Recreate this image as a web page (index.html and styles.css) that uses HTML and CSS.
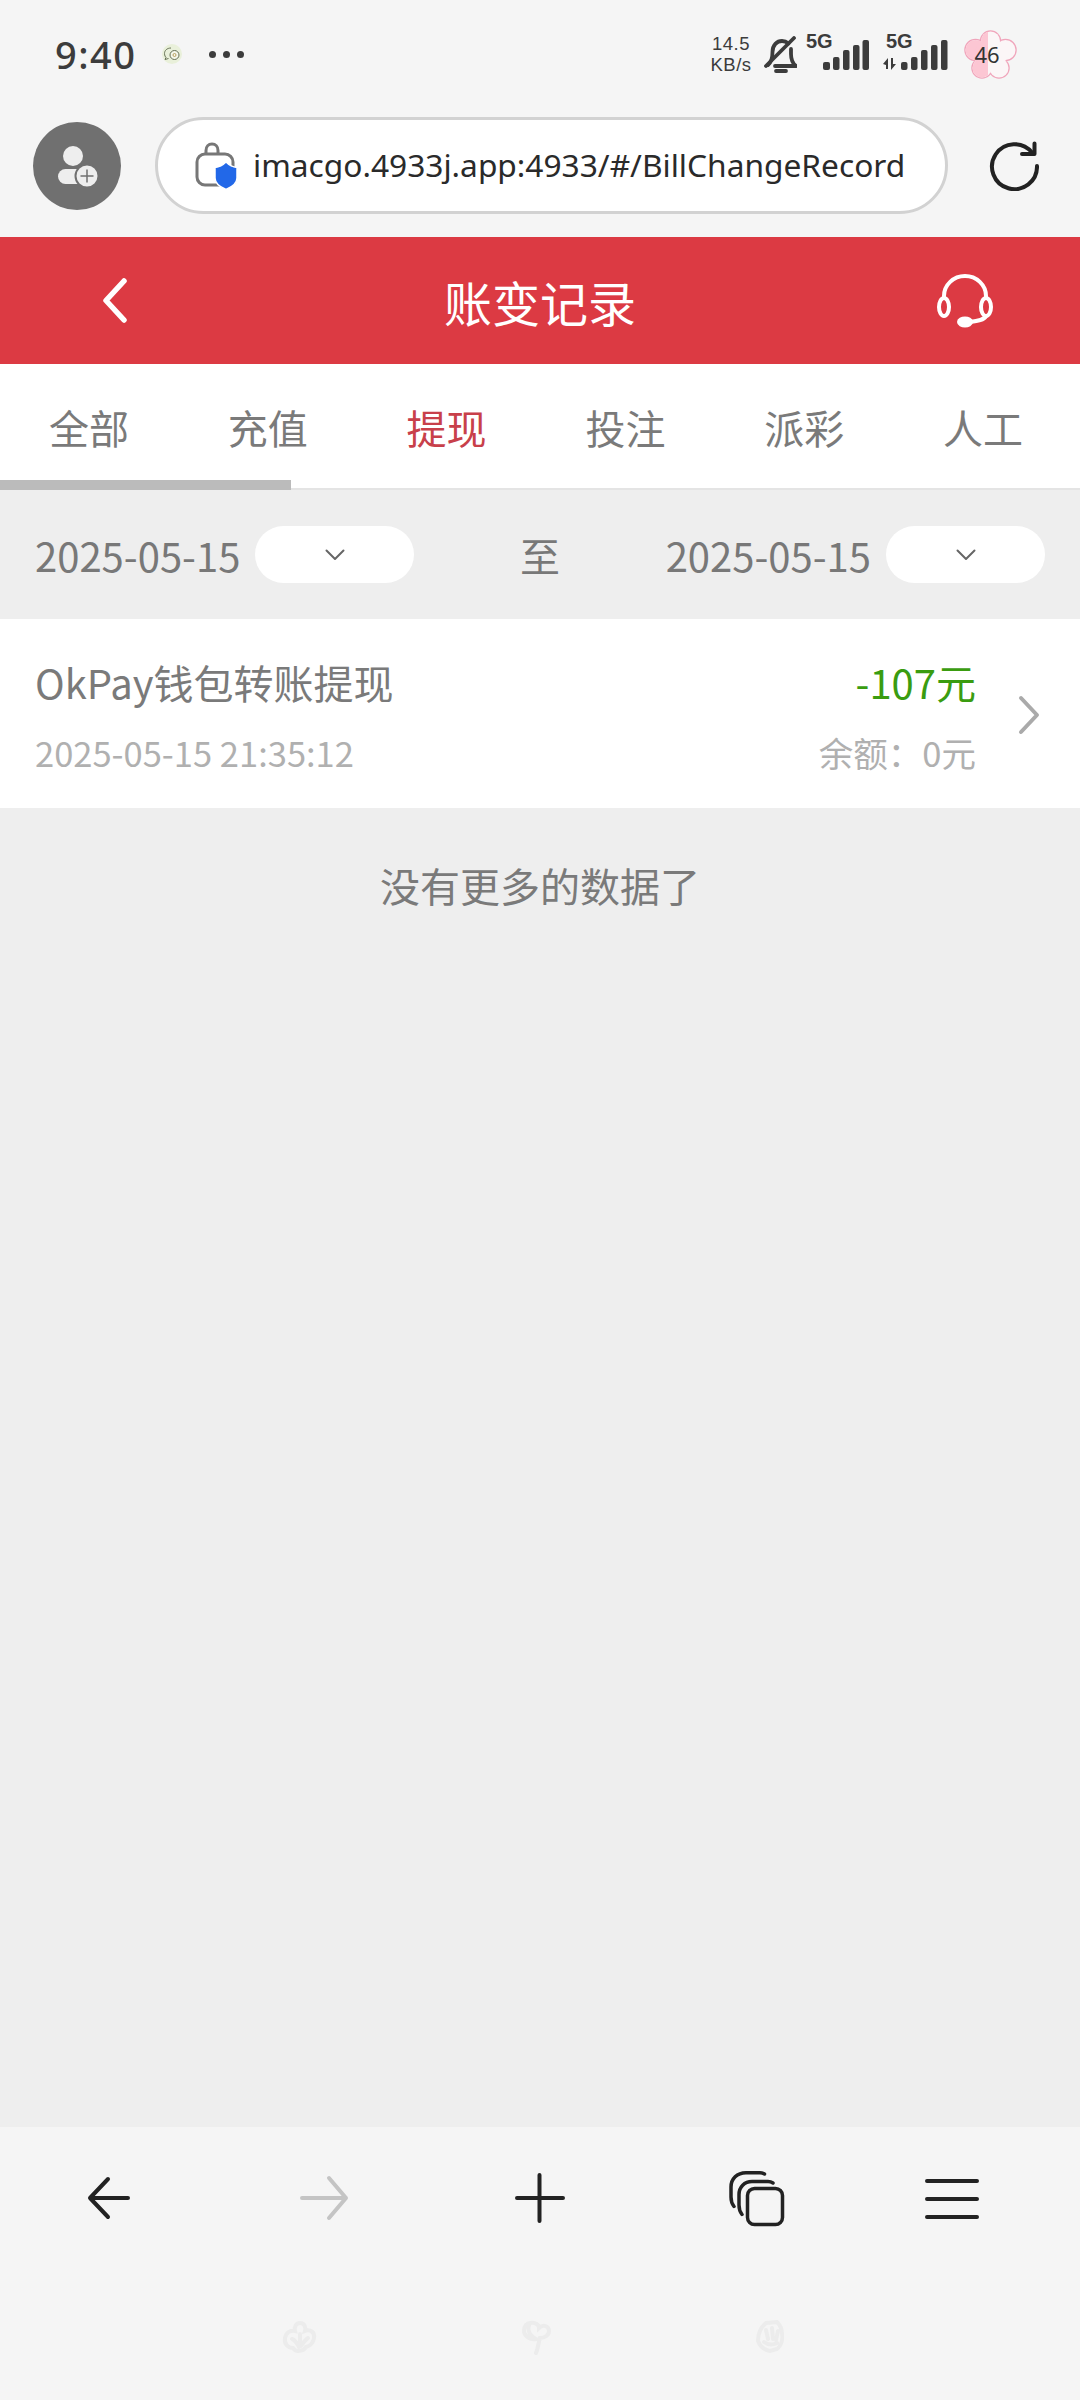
FILE: index.html
```html
<!DOCTYPE html>
<html lang="zh-CN">
<head>
    <meta charset="UTF-8">
    <title>账变记录</title>
    <link rel="stylesheet" href="styles.css">
</head>
<body>
<div class="page">
    <!-- system status bar -->
    <div class="status">
        <span class="time">9:40</span>
        <svg class="chat-icon" width="20" height="20" viewBox="0 0 20 20">
            <circle cx="10" cy="10" r="10" fill="#e9f0da"/>
            <path d="M9 4C5 4 2.500 6.500 2.500 9.500C2.500 11.500 3.500 13 4 13.500L3 15.500L6.500 14.500" fill="none" stroke="#667055" stroke-width="1"/>
            <circle cx="12.500" cy="11" r="4.500" fill="#f4f7ea" stroke="#667055" stroke-width="1"/>
            <circle cx="12.500" cy="11" r="1.500" fill="none" stroke="#b8a060" stroke-width="1"/>
        </svg>
        <span class="dots"><i></i><i></i><i></i></span>
        <div class="status-right">
            <div class="speed">14.5<br>KB/s</div>
            <svg class="bell" width="33" height="37" viewBox="0 0 33 37" fill="none" stroke="#3c3c3c" stroke-width="3.800" stroke-linecap="round" stroke-linejoin="round">
                <path d="M4 29C7.500 26 8.500 23 8.500 16C8.500 9 13 5 18 5C20.500 5 22.500 5.800 24.500 7.500"/>
                <path d="M27 13V18C27 24 28 27 32 30H11"/>
                <path d="M12 35H22"/>
                <path d="M30 2L2 30"/>
            </svg>
            <div class="signal">
                <span class="net">5G</span>
                <svg width="46" height="30" viewBox="0 0 46 30" fill="#3c3c3c">
                    <rect x="0" y="22" width="7" height="8" rx="2"/>
                    <rect x="10" y="17" width="6.500" height="13" rx="2"/>
                    <rect x="20" y="10" width="6.500" height="20" rx="2"/>
                    <rect x="30" y="5" width="6.500" height="25" rx="2"/>
                    <rect x="39.500" y="0" width="6.500" height="30" rx="2"/>
                </svg>
            </div>
            <div class="signal signal-two">
                <span class="net">5G</span>
                <svg width="65" height="30" viewBox="0 0 65 30" fill="#3c3c3c">
                    <path d="M0 24L5 18V29H3V25ZM8 18H10V24H13L8 30Z"/>
                    <rect x="18" y="22" width="6.500" height="8" rx="2"/>
                    <rect x="28" y="17" width="6.500" height="13" rx="2"/>
                    <rect x="38" y="10" width="6.500" height="20" rx="2"/>
                    <rect x="48" y="5" width="6.500" height="25" rx="2"/>
                    <rect x="58" y="0" width="6.500" height="30" rx="2"/>
                </svg>
            </div>
            <div class="battery">
                <svg width="53" height="49" viewBox="0 0 53 49">
                    <defs>
                        <clipPath id="halfFlower"><rect x="0" y="0" width="24" height="49"/></clipPath>
                        <g id="petals">
                            <circle cx="26.500" cy="11" r="9.500"/>
                            <circle cx="41.500" cy="20" r="10"/>
                            <circle cx="35" cy="38" r="9.500"/>
                            <circle cx="18" cy="38" r="9.500"/>
                            <circle cx="11.500" cy="20" r="10"/>
                            <circle cx="26.500" cy="25" r="16"/>
                        </g>
                    </defs>
                    <use href="#petals" fill="none" stroke="#f0a5bb" stroke-width="2.500"/>
                    <use href="#petals" fill="#fbf6f7"/>
                    <use href="#petals" fill="#fcc6d3" clip-path="url(#halfFlower)"/>
                </svg>
                <span class="battery-num">46</span>
            </div>
        </div>
    </div>

    <!-- browser address bar -->
    <div class="browser">
        <div class="avatar">
            <svg width="88" height="88" viewBox="0 0 88 88">
                <circle cx="40" cy="34" r="10" fill="#eee"/>
                <rect x="25" y="47" width="30" height="15" rx="7.500" fill="#eee"/>
                <circle cx="54" cy="54" r="11.500" fill="#eee" stroke="#707070" stroke-width="2"/>
                <path d="M47.500 54H60.500M54 47.500V60.500" stroke="#707070" stroke-width="1.500"/>
            </svg>
        </div>
        <div class="url-box">
            <svg class="lock" width="43" height="48" viewBox="0 0 43 48" fill="none">
                <path d="M11 12V8.500C11 4.500 13.500 2 17 2C20.500 2 23 4.500 23 8.500V12" stroke="#777" stroke-width="3"/>
                <rect x="2" y="12" width="36" height="31" rx="8" stroke="#777" stroke-width="3"/>
                <path d="M31 20C34.500 23.500 37.500 25 42 25.500V36C42 41.500 37 45 31 47.500C25 45 20 41.500 20 36V25.500C24.500 25 27.500 23.500 31 20Z" fill="#2268e8" stroke="#fff" stroke-width="1.500"/>
            </svg>
            <span class="url">imacgo.4933j.app:4933/#/BillChangeRecord</span>
        </div>
        <svg class="refresh" width="50" height="50" viewBox="0 0 50 50" fill="none" stroke="#222" stroke-width="4" stroke-linecap="round" stroke-linejoin="round">
            <path d="M48 25A22.500 22.500 0 1 1 43 11.500"/>
            <path d="M33 13H45.500V2.500"/>
        </svg>
    </div>

    <!-- red title bar -->
    <div class="title-bar">
        <svg class="back" width="24" height="45" viewBox="0 0 24 45" fill="none" stroke="#fff" stroke-width="5.500" stroke-linecap="round" stroke-linejoin="round">
            <path d="M21 3L3 22.500L21 42"/>
        </svg>
        <h1 class="title">账变记录</h1>
        <svg class="service" width="56" height="54" viewBox="0 0 56 54" fill="none" stroke="#fff" stroke-width="4" stroke-linecap="round">
            <path d="M7 24V22A21 20 0 0 1 49 22V24"/>
            <ellipse cx="7" cy="33" rx="5" ry="9"/>
            <ellipse cx="49" cy="33" rx="5" ry="9"/>
            <path d="M49 42C47 46 41 47 33 48"/>
            <ellipse cx="28" cy="48" rx="6" ry="3.500" fill="#fff"/>
        </svg>
    </div>

    <!-- type tabs -->
    <div class="tabs">
        <span class="tab">全部</span>
        <span class="tab">充值</span>
        <span class="tab tab-on">提现</span>
        <span class="tab">投注</span>
        <span class="tab">派彩</span>
        <span class="tab">人工</span>
        <i class="tab-bar"></i>
    </div>

    <div class="content">
        <div class="filter">
            <div class="date-group">
                <span class="date">2025-05-15</span>
                <div class="pick">
                    <svg width="20" height="12" viewBox="0 0 20 12" fill="none" stroke="#666" stroke-width="2" stroke-linecap="round" stroke-linejoin="round"><path d="M1.500 1.500L10 10L18.500 1.500"/></svg>
                </div>
            </div>
            <span class="date">至</span>
            <div class="date-group">
                <span class="date">2025-05-15</span>
                <div class="pick">
                    <svg width="20" height="12" viewBox="0 0 20 12" fill="none" stroke="#666" stroke-width="2" stroke-linecap="round" stroke-linejoin="round"><path d="M1.500 1.500L10 10L18.500 1.500"/></svg>
                </div>
            </div>
        </div>

        <div class="record">
            <div class="record-main">
                <div class="record-name">OkPay钱包转账提现</div>
                <div class="record-time">2025-05-15 21:35:12</div>
            </div>
            <div class="record-side">
                <div class="record-money">-107元</div>
                <div class="record-left">余额：0元</div>
            </div>
            <svg class="record-go" width="22" height="40" viewBox="0 0 22 40" fill="none" stroke="#aaa" stroke-width="4" stroke-linecap="round" stroke-linejoin="round">
                <path d="M3 3L19 20L3 37"/>
            </svg>
        </div>

        <div class="no-more">没有更多的数据了</div>
    </div>

    <!-- browser bottom bar -->
    <div class="nav">
        <div class="nav-row">
            <svg width="60" height="60" viewBox="0 0 60 60" fill="none" stroke="#222" stroke-width="4" stroke-linecap="round" stroke-linejoin="round">
                <path d="M11 30H49M29 11L11 30L29 49"/>
            </svg>
            <svg width="60" height="60" viewBox="0 0 60 60" fill="none" stroke="#c4c4c4" stroke-width="4" stroke-linecap="round" stroke-linejoin="round">
                <path d="M7 30H51M34 10L51 30L34 50"/>
            </svg>
            <svg width="60" height="60" viewBox="0 0 60 60" fill="none" stroke="#222" stroke-width="4" stroke-linecap="round">
                <path d="M6 30H52M28.500 7V53"/>
            </svg>
            <svg width="60" height="60" viewBox="0 0 60 60" fill="none" stroke="#222" stroke-width="3.500" stroke-linecap="round" stroke-linejoin="round">
                <rect x="20.500" y="20.500" width="35" height="36" rx="7"/>
                <path d="M46 15C44.500 14 43 13.500 41 13.500H25C17.500 13.500 12 19 12 26.500V37C12 41 13 44 15 46.500"/>
                <path d="M37.500 6C36 5 34.500 4.700 33 4.700H19C10 4.700 4 11 4 19V29C4 33 5 36 7 38.500"/>
            </svg>
            <svg width="60" height="60" viewBox="0 0 60 60" fill="none" stroke="#222" stroke-width="4" stroke-linecap="round">
                <path d="M5 13H55M5 31H55M5 49H55"/>
            </svg>
        </div>
        <div class="gesture">
            <svg width="35" height="35" viewBox="0 0 35 35" fill="none" stroke="#ececec" stroke-width="4" stroke-linecap="round">
                <path d="M18 3C23 3 24 8 23 11C28 9 33 12 32 18C31 24 28 26 24 27C22 31 14 33 11 28C6 28 2 24 3 18C4 12 9 10 13 11C12 7 14 3 18 3Z"/>
                <path d="M10 19C13 20 15 23 17 27M18 14V26M26 18C23 20 21 23 19 26"/>
            </svg>
            <svg width="29" height="35" viewBox="0 0 29 35" fill="none" stroke="#ececec" stroke-width="4" stroke-linecap="round">
                <path d="M8 3C14 2 17 5 17 8C21 4 27 6 27 11C27 15 23 18 18 18C16 24 16 29 14 33M2 11C2 6 5 3 8 3C5 8 6 15 14 19C8 20 2 16 2 11Z"/>
            </svg>
            <svg width="28" height="33" viewBox="0 0 28 33" fill="none" stroke="#ececec" stroke-width="4" stroke-linecap="round">
                <path d="M10 3L21 2C24 5 26 9 26 14C27 20 25 26 21 29L14 31C8 30 4 26 2 21C2 14 4 8 10 3Z"/>
                <path d="M10 10L12 19M16 8L17 19M22 11L20 20M8 22C12 25 17 25 21 23"/>
            </svg>
        </div>
    </div>
</div>
</body>
</html>
```

FILE: styles.css
```css
body {
    margin: 0;
    font-family: "Noto Sans CJK SC", "Noto Sans", sans-serif;
}
h1 {
    margin: 0;
    font-weight: normal;
}
i {
    font-style: normal;
}
svg {
    display: block;
    flex: none;
}
.page {
    display: flex;
    flex-direction: column;
    height: 2400px;
    background: #eee;
}

/* status bar */
.status {
    display: flex;
    align-items: center;
    height: 108px;
    padding: 0 63px 0 55px;
    box-sizing: border-box;
    background: #f5f5f5;
    color: #3c3c3c;
}
.time {
    width: 107px;
    font-family: "Noto Sans", sans-serif;
    font-size: 38px;
    font-weight: 500;
    letter-spacing: 1.500px;
}
.dots {
    display: flex;
    gap: 7px;
    margin-left: 27px;
}
.dots i {
    width: 7px;
    height: 7px;
    border-radius: 50%;
    background: #3c3c3c;
}
.status-right {
    display: flex;
    align-items: center;
    margin-left: auto;
}
.speed {
    width: 42px;
    text-align: center;
    white-space: nowrap;
    font-family: "Liberation Sans", sans-serif;
    font-size: 18.500px;
    letter-spacing: 0.500px;
    line-height: 21.500px;
}
.bell {
    margin-left: 12px;
}
.signal {
    position: relative;
    margin-left: 26px;
    padding-top: 2px;
}
.signal-two {
    margin-left: 14px;
}
.net {
    position: absolute;
    left: -17px;
    top: -8px;
    font-family: "Liberation Sans", sans-serif;
    font-size: 20px;
    font-weight: bold;
}
.signal-two .net {
    left: 3px;
}
.battery {
    position: relative;
    margin-left: 16px;
}
.battery-num {
    position: absolute;
    left: 9px;
    top: 9px;
    width: 28px;
    text-align: center;
    font-family: "Noto Sans", sans-serif;
    font-size: 22px;
    line-height: 30px;
    color: #333;
}

/* address bar */
.browser {
    display: flex;
    align-items: center;
    gap: 34px;
    height: 129px;
    padding: 0 41px 14px 33px;
    box-sizing: border-box;
    background: #f5f5f5;
}
.avatar {
    flex: none;
    width: 88px;
    height: 88px;
    border-radius: 50%;
    background: #707070;
}
.url-box {
    flex: 1;
    display: flex;
    align-items: center;
    gap: 15px;
    height: 97px;
    padding-left: 37px;
    box-sizing: border-box;
    border: 3px solid #d2d2d2;
    border-radius: 49px;
    background: #fff;
}
.url {
    margin-top: -3px;
    font-family: "Noto Sans", sans-serif;
    font-size: 31.700px;
    color: #2a2a2a;
    white-space: nowrap;
}
.refresh {
    margin-left: 7px;
}

/* title */
.title-bar {
    display: grid;
    grid-template-columns: 1fr auto 1fr;
    align-items: center;
    height: 127px;
    padding: 0 87px;
    box-sizing: border-box;
    background: #dc3a43;
}
.back {
    margin-left: 16px;
}
.service {
    justify-self: end;
}
.title {
    font-size: 48px;
    line-height: 1;
    color: #fff;
}

/* tabs */
.tabs {
    position: relative;
    display: flex;
    justify-content: space-between;
    height: 126px;
    padding: 0 57px 0 49px;
    box-sizing: border-box;
    border-bottom: 2px solid #e4e4e4;
    background: #fff;
}
.tab {
    font-size: 40px;
    line-height: 126px;
    color: #7a7a7a;
}
.tab-on {
    color: #c8404a;
}
.tab-bar {
    position: absolute;
    left: 0;
    bottom: -2px;
    width: 291px;
    height: 10px;
    background: #bbb;
}

/* list */
.content {
    flex: 1;
}
.filter {
    display: flex;
    align-items: center;
    justify-content: space-between;
    height: 129px;
    padding: 0 35px;
    box-sizing: border-box;
}
.date-group {
    display: flex;
    align-items: center;
    gap: 15px;
}
.date {
    font-size: 40px;
    line-height: 60px;
    padding-top: 1px;
    color: #787878;
}
.pick {
    display: flex;
    align-items: center;
    justify-content: center;
    width: 159px;
    height: 57px;
    border-radius: 29px;
    background: #fff;
}
.record {
    display: flex;
    align-items: center;
    height: 189px;
    padding: 1px 40px 0 35px;
    box-sizing: border-box;
    background: #fff;
}
.record-main {
    flex: 1;
}
.record-name {
    font-size: 40px;
    line-height: 60px;
    color: #7a7a7a;
}
.record-time {
    margin-top: 15px;
    font-size: 34.500px;
    line-height: 50px;
    color: #b0b0b0;
}
.record-side {
    text-align: right;
}
.record-money {
    font-size: 40px;
    line-height: 60px;
    color: #3a9c10;
}
.record-left {
    margin-top: 15px;
    font-size: 34.500px;
    line-height: 50px;
    color: #b0b0b0;
}
.record-go {
    margin-left: 42px;
    margin-top: 2px;
}
.no-more {
    margin-top: 47px;
    font-size: 40px;
    line-height: 60px;
    text-align: center;
    color: #7a7a7a;
}

/* bottom bar */
.nav {
    height: 273px;
    padding-top: 41px;
    box-sizing: border-box;
    background: #f5f5f5;
}
.nav-row {
    display: grid;
    grid-template-columns: repeat(4, 216px) 174px;
    justify-items: center;
    padding-left: 1px;
}
.gesture {
    display: flex;
    gap: 205px;
    margin-top: 92px;
    padding-left: 282px;
}
```
